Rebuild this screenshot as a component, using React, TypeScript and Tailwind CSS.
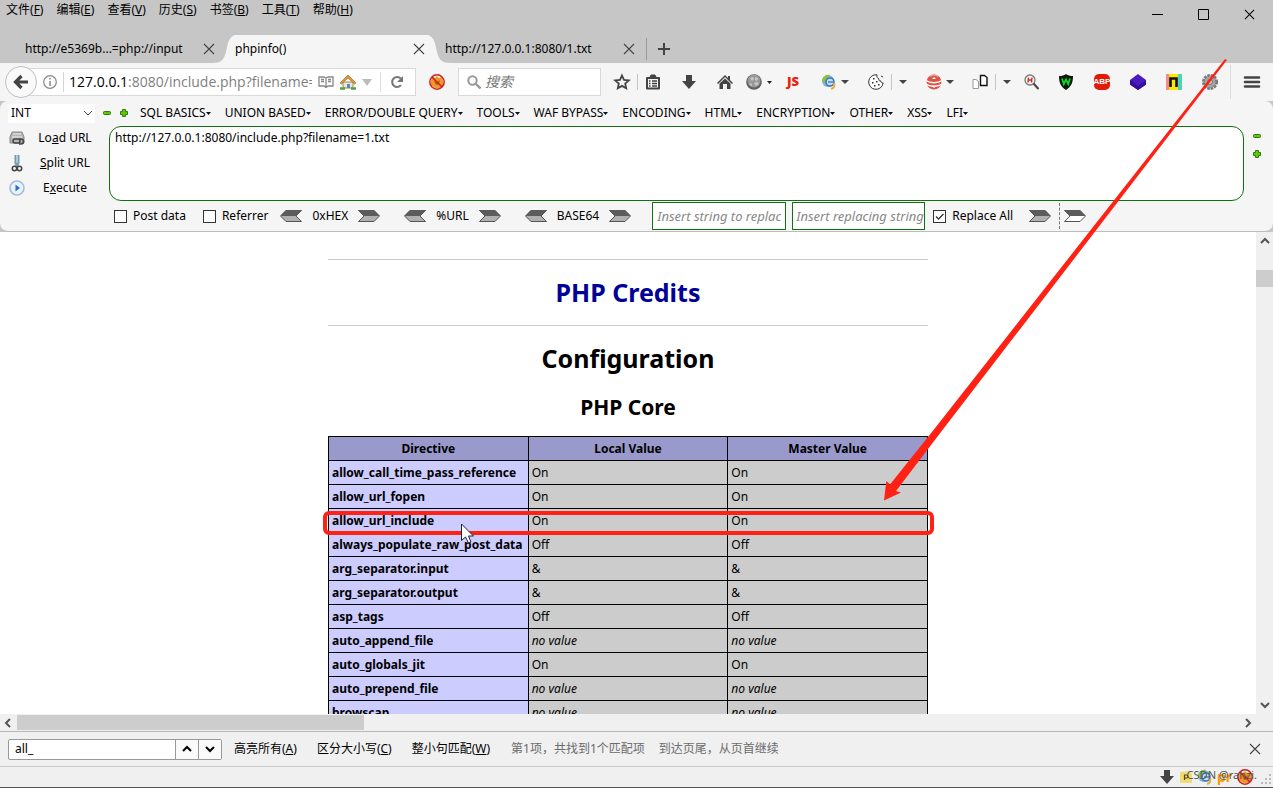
import React, { useState } from "react";

const MENUS = [
  ["文件", "F"],
  ["编辑", "E"],
  ["查看", "V"],
  ["历史", "S"],
  ["书签", "B"],
  ["工具", "T"],
  ["帮助", "H"],
];

const HACKBAR_MENUS = [
  "SQL BASICS",
  "UNION BASED",
  "ERROR/DOUBLE QUERY",
  "TOOLS",
  "WAF BYPASS",
  "ENCODING",
  "HTML",
  "ENCRYPTION",
  "OTHER",
  "XSS",
  "LFI",
];

const DIRECTIVES = [
  { name: "allow_call_time_pass_reference", value: "On" },
  { name: "allow_url_fopen", value: "On" },
  { name: "allow_url_include", value: "On", marked: true },
  { name: "always_populate_raw_post_data", value: "Off" },
  { name: "arg_separator.input", value: "&" },
  { name: "arg_separator.output", value: "&" },
  { name: "asp_tags", value: "Off" },
  { name: "auto_append_file", value: "" },
  { name: "auto_globals_jit", value: "On" },
  { name: "auto_prepend_file", value: "" },
  { name: "browscap", value: "" },
];

const Cross = ({ className = "size-3" }: { className?: string }) => (
  <svg viewBox="0 0 12 12" className={className} fill="none" stroke="currentColor" strokeWidth="1.1">
    <path d="M1 1l10 10M11 1L1 11" />
  </svg>
);

const Chevron = ({ d, className }: { d: string; className: string }) => (
  <svg viewBox="0 0 10 10" className={className} fill="none" stroke="currentColor" strokeWidth="2">
    <path d={d} />
  </svg>
);

const UP = "M1 7l4-4 4 4";
const DOWN = "M1 3l4 4 4-4";
const LEFT = "M7 1L3 5l4 4";
const RIGHT = "M3 1l4 4-4 4";

const Caret = ({ className = "ml-1" }: { className?: string }) => (
  <svg viewBox="0 0 8 4" className={`h-1 w-2 shrink-0 ${className}`}>
    <path d="M0 0h8L4 4z" fill="#444" />
  </svg>
);

const Separator = () => <span className="ml-[7px] h-4 w-px shrink-0 bg-[#c4c4c4]" />;

const Icon = ({ children, className = "ml-5", label }: { children: React.ReactNode; className?: string; label: string }) => (
  <button type="button" aria-label={label} className={`size-4 shrink-0 ${className}`}>
    <svg viewBox="0 0 16 16" className="size-4 overflow-visible">
      {children}
    </svg>
  </button>
);

const TabEdge = ({ flip = false }: { flip?: boolean }) => (
  <svg viewBox="0 0 26 28" className={`h-7 w-[26px] shrink-0 ${flip ? "-scale-x-100" : ""}`}>
    <path d="M0 28C9 28 12 25 14 17C16 7 17 0 26 0V28Z" fill="#f5f5f5" />
  </svg>
);

const NoFox = () => (
  <>
    <path d="M2 6l2-3 2 1 2-2 2 2 3-1 1 3v5l-3 3H6l-4-3z" fill="#f0962a" />
    <path d="M5 7l3 1 3-2-1 4-3 1z" fill="#b8600c" />
    <circle cx="8" cy="8" r="7.2" fill="none" stroke="#c9221c" strokeWidth="1.5" />
    <path d="M3 3l10 10" stroke="#c9221c" strokeWidth="1.5" />
  </>
);

const Earth = () => (
  <>
    <circle cx="7" cy="7" r="6" fill="#7fb2e4" />
    <path d="M1 6c1-4 5-6 8-5-1 2-3 2-3 4s-3 3-4 4z" fill="#8fc23c" />
    <circle cx="9" cy="8" r="4" fill="#c6def2" stroke="#3c78b8" strokeWidth="1.6" />
    <path d="M10 15c3-1 4-3 3-6" fill="none" stroke="#e3b03c" strokeWidth="2" />
    <path d="M7 8h5" stroke="#3c78b8" strokeWidth="1.3" />
  </>
);

const Minus = () => (
  <svg viewBox="0 0 8 8" className="size-2">
    <rect x="0.5" y="2.5" width="7" height="3" rx="1" fill="#5dc80b" stroke="#2f7d05" />
  </svg>
);

const Plus = () => (
  <svg viewBox="0 0 8 8" className="size-2">
    <path d="M2.5 .5h3v2h2v3h-2v2h-3v-2h-2v-3h2z" fill="#5dc80b" stroke="#2f7d05" />
  </svg>
);

const Ribbon = ({ flip = false, hollow = false }: { flip?: boolean; hollow?: boolean }) => (
  <button type="button" aria-label={flip ? "decode" : "encode"} className="h-3 w-[22px] shrink-0">
    <svg viewBox="0 0 22 12" className={`h-3 w-[22px] ${flip ? "-scale-x-100" : ""}`}>
      <path d="M.5 .5H16L21.5 6L16 11.5H.5L6 6Z" fill={hollow ? "#fff" : "#b0b0b0"} stroke="#555" />
      <path d="M0 0H16L21.5 6H6Z" fill="#5c5c5c" />
    </svg>
  </button>
);

const TitleBar = () => (
  <header className="bg-[#c6c6c6]">
    <div className="flex h-[35px] items-start justify-between">
      <nav className="flex gap-[13px] pl-1.5 pt-0.5 text-xs">
        {MENUS.map(([label, key]) => (
          <button type="button" key={key} className="leading-4">
            {label}(<u>{key}</u>)
          </button>
        ))}
      </nav>
      <div className="flex h-7 items-center gap-[35px] pr-[18px]">
        <button type="button" aria-label="minimize">
          <svg viewBox="0 0 11 11" className="size-[11px]"><path d="M0 5.5h11" stroke="#000" /></svg>
        </button>
        <button type="button" aria-label="maximize">
          <svg viewBox="0 0 11 11" className="size-[11px]"><path d="M.5.5h10v10H.5z" fill="none" stroke="#000" /></svg>
        </button>
        <button type="button" aria-label="close"><Cross className="size-[11px]" /></button>
      </div>
    </div>
    <div className="flex h-7 items-center text-xs">
      <div className="flex w-[212px] shrink-0 items-center justify-between pl-[25px]">
        <span>http://e5369b...=php://input</span>
        <button type="button" aria-label="close tab" className="-mr-[3px] text-[#444]"><Cross /></button>
      </div>
      <TabEdge />
      <div className="z-10 -mx-1 flex h-7 w-[195px] shrink-0 items-center justify-between bg-[#f5f5f5] pl-px pr-1">
        <span>phpinfo()</span>
        <button type="button" aria-label="close tab" className="text-[#444]"><Cross /></button>
      </div>
      <TabEdge flip />
      <div className="-ml-[15px] flex w-[199px] shrink-0 items-center justify-between pl-[9px]">
        <span className="z-10">http://127.0.0.1:8080/1.txt</span>
        <button type="button" aria-label="close tab" className="text-[#444]"><Cross /></button>
      </div>
      <span className="ml-[11px] h-[22px] w-px bg-[#999]" />
      <button type="button" aria-label="new tab" className="ml-[11px]">
        <svg viewBox="0 0 12 12" className="size-3"><path d="M6 0v12M0 6h12" stroke="#444" strokeWidth="2" /></svg>
      </button>
    </div>
  </header>
);

const NavBar = () => (
  <div className="flex h-[38px] items-center bg-[#f5f5f5] pl-[5px]">
    <button
      type="button"
      aria-label="back"
      className="z-10 -mr-[17px] flex size-8 shrink-0 items-center justify-center rounded-full border border-[#c0c0c0] bg-[#fafafa]"
    >
      <svg viewBox="0 0 16 16" className="size-4">
        <path d="M8.5 2L2.5 8l6 6M3 8h12" fill="none" stroke="#444" strokeWidth="3.2" />
      </svg>
    </button>
    <div className="flex h-7 min-w-0 flex-1 items-center border border-[#d9d9d9] bg-white pl-[22px]">
      <svg viewBox="0 0 14 14" className="size-3.5 shrink-0">
        <circle cx="7" cy="7" r="6.3" fill="none" stroke="#888" strokeWidth="1.2" />
        <path d="M7 6v5M7 3v1.6" stroke="#888" strokeWidth="1.5" />
      </svg>
      <span className="ml-1.5 h-5 w-px shrink-0 bg-[#d4d4d4]" />
      <div className="ml-[5px] min-w-0 flex-1 overflow-hidden font-['Open_Sans','Noto_Sans',sans-serif] text-sm whitespace-nowrap text-[#808080]">
        <span className="text-black">127.0.0.1</span>:8080/include.php?filename=1.txt
      </div>
      <Icon label="reader view" className="ml-1.5">
        <path d="M1 3h5l2 1 2-1h5v9h-5l-2 1.5L6 12H1zM8 4v9M3 5.5h3M3 7.5h3M10 5.5h3M10 7.5h3" fill="none" stroke="#888" strokeWidth="1.3" />
      </Icon>
      <Icon label="home page" className="ml-1.5">
        <path d="M3 8h10v6H3z" fill="#ece5d5" stroke="#9c8868" />
        <path d="M7 10h3v4H7z" fill="#5b87c0" />
        <path d="M0 9L8 1l8 8-1.5 1L8 4l-6.5 6z" fill="#e09a3c" stroke="#a86820" strokeWidth=".7" />
        <path d="M0 14.500h5M11 14.500h5" stroke="#51a53c" strokeWidth="2.5" />
      </Icon>
      <svg viewBox="0 0 10 7" className="ml-1.5 h-[7px] w-2.5 shrink-0"><path d="M0 0h10L5 7z" fill="#bbb" /></svg>
      <span className="ml-2 h-5 w-px shrink-0 bg-[#dedede]" />
      <Icon label="reload" className="ml-2 mr-2.5">
        <path d="M12 11.200A5 5 0 1 1 11.800 4.500" fill="none" stroke="#777" strokeWidth="2" />
        <path d="M14 2v6H8z" fill="#777" />
      </Icon>
    </div>
    <Icon label="proxy off" className="ml-[13px]"><NoFox /></Icon>
    <div className="ml-[13px] flex h-7 w-[143px] shrink-0 items-center border border-[#d9d9d9] bg-white pl-2">
      <svg viewBox="0 0 14 14" className="size-3.5 shrink-0">
        <circle cx="5.5" cy="5.5" r="4.2" fill="none" stroke="#999" strokeWidth="2" />
        <path d="M8.5 8.5l5 5" stroke="#999" strokeWidth="2.4" />
      </svg>
      <input aria-label="搜索" placeholder="搜索" className="ml-1 w-full min-w-0 text-sm italic outline-none placeholder:text-[#777]" />
    </div>
    <Icon label="bookmark" className="ml-[13px]">
      <path d="M8 1.5l2 4.400 4.800.5-3.600 3.200 1 4.700L8 11.900l-4.200 2.400 1-4.700L1.200 6.400 6 5.900z" fill="none" stroke="#444" strokeWidth="1.8" />
    </Icon>
    <Separator />
    <Icon label="bookmarks list" className="ml-[7px]">
      <path d="M2 4h12v10.500H2z" fill="none" stroke="#444" strokeWidth="2" strokeLinejoin="round" />
      <path d="M5 3l1-2h4l1 2z" fill="#444" stroke="#444" />
      <path d="M4 7h1.500M7 7h5M4 9.500h1.500M7 9.500h5M4 12h1.500M7 12h5" stroke="#444" strokeWidth="1.3" />
    </Icon>
    <Icon label="downloads"><path d="M5 1h6v6h4l-7 8-7-8h4z" fill="#444" /></Icon>
    <Icon label="home">
      <path d="M0 9l8-8 3 3V2h2v4l3 3-1 1-7-7-7 7z" fill="#444" />
      <path d="M2.5 9.500L8 4.500l5.500 5V15H10v-5H6v5H2.500z" fill="#444" />
    </Icon>
    <Icon label="user agent" className="ml-[13px]">
      <circle cx="8" cy="8" r="7.8" fill="#606060" />
      <circle cx="8" cy="7" r="6.5" fill="#999" />
      <path d="M4 4l3-1 1 2-2 2zM9 3l3 1-1 3-2-1zM3 9l3 1v2l-2-1zM8 9l3-1 2 2-3 2z" fill="#c8c8c8" />
    </Icon>
    <svg viewBox="0 0 5 3" className="ml-[5px] h-[3px] w-[5px] shrink-0"><path d="M0 0h5L2.5 3z" fill="#222" /></svg>
    <button type="button" className="ml-3 w-[18px] shrink-0 text-center font-['Open_Sans',sans-serif] text-[13px] font-extrabold text-[#ee1c0c]">JS</button>
    <Icon label="earth" className="ml-[19px]"><Earth /></Icon>
    <Caret />
    <Icon label="cookies" className="ml-[19px]">
      <path d="M9 .8A7.300 7.300 0 1 0 15.200 9c-1.700.2-2.500-1-2.200-2-1.600.3-2.600-.8-2.100-2.200C9.300 4.400 8.500 2.700 9 .8zM13 2l2 1" fill="#fff" stroke="#333" />
      <path d="M5 4h1.500v1.500H5zM4 8h1.500v1.500H4zM8 7h1.500v1.500H8zM6 11h1.500v1.500H6zM10 10h1.500v1.500H10z" fill="#333" />
    </Icon>
    <Separator />
    <Caret className="ml-[7px]" />
    <Icon label="stack" className="ml-[19px]">
      <circle cx="8" cy="8" r="7.5" fill="#dd5546" />
      <path d="M4 2.500a7 7 0 0 1 8 0" fill="none" stroke="#f0a095" strokeWidth="1.5" />
      <path d="M0 6.500c4 3 12 3 16 0M0 10c4 3 12 3 16 0" fill="none" stroke="#fff" strokeWidth="1.3" />
      <path d="M6 5l2-2 2 2zM6 12l2 2 2-2z" fill="#fff" />
    </Icon>
    <Caret />
    <Icon label="session pages" className="ml-[18px]">
      <path d="M1 5.500h3l2.500 2V14.500H1z" fill="#fff" stroke="#999" />
      <path d="M8.500 1.500h4l2.500 2v8H8.500z" fill="#fff" stroke="#111" strokeWidth="1.4" />
    </Icon>
    <Separator />
    <Caret className="ml-[7px]" />
    <Icon label="inspect" className="ml-[13px]">
      <circle cx="6" cy="6" r="5" fill="#fff" stroke="#777" strokeWidth="1.3" />
      <path d="M4.500 3.500l-.5 5M8 3.500l-.5 5M4.300 6h3.500" stroke="#d9261c" strokeWidth="1.5" />
      <path d="M9.500 9.500l5 5.500" stroke="#444" strokeWidth="2" />
    </Icon>
    <Icon label="wappalyzer" className="ml-[18px]">
      <path d="M8 0c2 1.500 4 2 7 2 0 7-2 11-7 14C3 13 1 9 1 2c3 0 5-.5 7-2z" fill="#0c1a0c" />
      <path d="M4 4.500l1.800 5.500L8 5.500 10.200 10 12 4.500" fill="none" stroke="#12d52a" strokeWidth="1.8" />
    </Icon>
    <button
      type="button"
      className="ml-5 flex h-4 w-4 shrink-0 items-center justify-center rounded-[5px] bg-[#e21a08] font-['Liberation_Sans',sans-serif] text-[8px] font-bold text-white"
    >
      ABP
    </button>
    <Icon label="layers">
      <path d="M0 10.500L8 5l8 5.500L8 16z" fill="#2b0c80" />
      <path d="M0 6v4.500L8 16l8-5.500V6z" fill="#34109a" />
      <path d="M0 6L8 0l8 6-8 6z" fill="#4a1cc0" />
    </Icon>
    <Icon label="netsparker">
      <path d="M0 0h4v16H0z" fill="#f08c8c" />
      <path d="M3 0h9v16H3z" fill="#ffe500" />
      <path d="M12 0h4v16h-4z" fill="#52d0b8" />
      <path d="M4.500 13V4.500h6V13" fill="none" stroke="#111" strokeWidth="2.6" />
    </Icon>
    <Icon label="settings">
      <circle cx="8" cy="8" r="6.5" fill="#a4a4a4" stroke="#777" strokeWidth="3" strokeDasharray="2.4 1" />
      <circle cx="8" cy="8" r="5.5" fill="#a4a4a4" />
      <circle cx="8" cy="8" r="2.5" fill="#ccc" stroke="#777" />
    </Icon>
    <span className="ml-3 h-[34px] w-px shrink-0 bg-[#dcdcdc]" />
    <Icon label="menu" className="mx-[13px]">
      <path d="M1 3.500h14M1 8h14M1 12.500h14" stroke="#444" strokeWidth="2.6" strokeLinecap="round" />
    </Icon>
  </div>
);

const CheckBox = ({ label, checked = false }: { label: string; checked?: boolean }) => {
  const [on, setOn] = useState(checked);
  return (
    <label className="flex items-center gap-1.5">
      <span className="grid size-[13px]">
        <input
          type="checkbox"
          checked={on}
          onChange={() => setOn(!on)}
          className="col-start-1 row-start-1 size-[13px] appearance-none border border-[#333] bg-white"
        />
        {on ? (
          <svg viewBox="0 0 13 13" className="pointer-events-none col-start-1 row-start-1 size-[13px]">
            <path d="M3 6.500l2.500 2.500L10.500 4" fill="none" stroke="#333" strokeWidth="1.3" />
          </svg>
        ) : null}
      </span>
      {label}
    </label>
  );
};

const Coder = ({ label }: { label: string }) => (
  <div className="flex items-center gap-2.5">
    <Ribbon flip />
    <span>{label}</span>
    <Ribbon />
  </div>
);

const HackBar = () => (
  <div className="bg-[#c6c6c6]">
    <div className="rounded-lg border-b border-[#bdbdbd] bg-[#f5f5f5] text-xs">
      <div className="flex h-6 items-center pl-2">
        <div className="grid h-[19px] w-[87px] shrink-0 items-center bg-white">
          <select aria-label="type" className="col-start-1 row-start-1 h-[19px] appearance-none pl-[3px]">
            <option>INT</option>
          </select>
          <svg viewBox="0 0 10 10" className="pointer-events-none col-start-1 row-start-1 mr-0.5 size-2.5 justify-self-end" fill="none" stroke="#444">
            <path d="M1 3l4 4 4-4" />
          </svg>
        </div>
        <button type="button" aria-label="remove" className="ml-2"><Minus /></button>
        <button type="button" aria-label="add" className="ml-[9px]"><Plus /></button>
        <div className="ml-3 flex gap-3.5">
          {HACKBAR_MENUS.map((name) => (
            <button type="button" key={name} className="flex items-center whitespace-nowrap">
              {name}
              <svg viewBox="0 0 5 3" className="h-[3px] w-[5px]"><path d="M0 0h5L2.5 3z" fill="#111" /></svg>
            </button>
          ))}
        </div>
      </div>
      <div className="flex items-start">
        <div className="w-[109px] shrink-0 pr-1">
          <button type="button" className="flex h-[25px] w-full items-center pl-[9px]">
            <svg viewBox="0 0 16 16" className="size-4">
              <path d="M3 2h10l2 5v6H1V7z" fill="#b5b5b5" stroke="#888" />
              <path d="M4 4h8M3 7h10" stroke="#eee" />
              <path d="M6 9h3a2 2 0 0 1 0 4H6a2 2 0 0 1 0-4zM10 9h2a2 2 0 0 1 0 5h-2" fill="none" stroke="#444" strokeWidth="1.5" />
            </svg>
            <span className="flex-1 text-center">Lo<u>a</u>d URL</span>
          </button>
          <button type="button" className="flex h-[25px] w-full items-center pl-[9px]">
            <svg viewBox="0 0 16 18" className="h-[18px] w-4">
              <path d="M6.500 1v8l3 3M9.500 1v8l-3 3" fill="none" stroke="#6c9cb0" strokeWidth="2" />
              <circle cx="5.5" cy="14.5" r="2.2" fill="none" stroke="#444" strokeWidth="1.5" />
              <circle cx="10.5" cy="14.5" r="2.2" fill="none" stroke="#444" strokeWidth="1.5" />
            </svg>
            <span className="flex-1 text-center"><u>S</u>plit URL</span>
          </button>
          <button type="button" className="flex h-[25px] w-full items-center pl-[9px]">
            <svg viewBox="0 0 16 16" className="size-4">
              <circle cx="8" cy="8" r="7" fill="#eaf3fc" stroke="#a3bbda" strokeWidth="1.6" />
              <path d="M6.500 4.500L11 8l-4.500 3.500z" fill="#2a6fc4" />
            </svg>
            <span className="flex-1 text-center">E<u>x</u>ecute</span>
          </button>
        </div>
        <textarea
          aria-label="url"
          defaultValue="http://127.0.0.1:8080/include.php?filename=1.txt"
          className="mt-px block h-[75px] min-w-0 flex-1 resize-none rounded-xl border border-[#127012] bg-white px-[5px] pt-[3px] outline-none"
        />
        <div className="flex w-[29px] shrink-0 flex-col items-center gap-2.5 pt-[7px] pr-1">
          <button type="button" aria-label="shrink" className="flex"><Minus /></button>
          <button type="button" aria-label="grow" className="flex"><Plus /></button>
        </div>
      </div>
      <div className="flex h-[30px] items-center pl-[114px]">
        <CheckBox label="Post data" />
        <div className="w-[17px]" />
        <CheckBox label="Referrer" />
        <div className="ml-3 flex gap-6">
          <Coder label="0xHEX" />
          <Coder label="%URL" />
          <Coder label="BASE64" />
        </div>
        <input
          aria-label="search string"
          placeholder="Insert string to replace"
          className="ml-[21px] h-7 w-[134px] border border-[#127012] bg-white px-1 text-[13px] italic outline-none placeholder:text-[#888]"
        />
        <input
          aria-label="replacing string"
          placeholder="Insert replacing string"
          className="ml-1.5 mr-2 h-7 w-[133px] border border-[#127012] bg-white pl-[3px] text-[13px] italic outline-none placeholder:text-[#888]"
        />
        <CheckBox label="Replace All" checked />
        <div className="ml-4 flex items-center gap-2">
          <Ribbon />
          <span className="h-[26px] border-l border-dashed border-[#777]" />
          <div className="-ml-1 flex"><Ribbon hollow /></div>
        </div>
      </div>
    </div>
  </div>
);

const cell = "h-6 border border-black px-[3px] leading-none align-middle";

const PhpInfo = () => (
  <main className="min-w-0 flex-1 overflow-hidden bg-white pt-[27px]">
    <div className="mx-auto w-[600px]">
      <hr className="border-[#ccc]" />
      <h1 className="flex h-[65px] items-center justify-center text-[25px] font-bold text-[#000099]">
        <a href="#credits">PHP Credits</a>
      </h1>
      <hr className="border-[#ccc]" />
      <h1 className="flex h-[65px] items-center justify-center text-[25px] font-bold">Configuration</h1>
      <h2 className="flex h-[45px] items-start justify-center text-[21px] leading-8 font-bold">PHP Core</h2>
      <table className="w-full table-fixed border-collapse text-xs">
        <thead>
          <tr className="bg-[#9999cc]">
            <th className={cell}>Directive</th>
            <th className={cell}>Local Value</th>
            <th className={cell}>Master Value</th>
          </tr>
        </thead>
        <tbody>
          {DIRECTIVES.map((row) => (
            <tr key={row.name} className="relative bg-[#cccccc]">
              <td className={`${cell} bg-[#ccccff] font-bold`}>
                {row.name}
                {row.marked ? (
                  <span className="pointer-events-none absolute -inset-x-1.5 top-0.5 z-10 h-6 rounded-md border-4 border-[#ff2214]" />
                ) : null}
              </td>
              <td className={cell}>{row.value || <i>no value</i>}</td>
              <td className={cell}>{row.value || <i>no value</i>}</td>
            </tr>
          ))}
        </tbody>
      </table>
    </div>
  </main>
);

const FindBar = () => (
  <div className="flex h-[35px] items-center border-t border-[#b8b8b8] bg-[#f0f0f0] pl-2 pr-3 text-xs">
    <div className="flex h-[21px] rounded-xs border border-[#999] bg-white">
      <input aria-label="find" defaultValue="all_" className="w-[166px] px-1.5 outline-none" />
      <button type="button" aria-label="previous" className="flex w-[23px] items-center justify-center border-l border-[#999] bg-[#fafafa]">
        <Chevron d={UP} className="size-2.5" />
      </button>
      <button type="button" aria-label="next" className="flex w-[23px] items-center justify-center border-l border-[#999] bg-[#fafafa]">
        <Chevron d={DOWN} className="size-2.5" />
      </button>
    </div>
    <div className="ml-3 flex gap-5">
      <button type="button">高亮所有(<u>A</u>)</button>
      <button type="button">区分大小写(<u>C</u>)</button>
      <button type="button">整小句匹配(<u>W</u>)</button>
    </div>
    <span className="ml-[21px] text-[#6c6c6c]">第1项，共找到1个匹配项</span>
    <span className="ml-3.5 flex-1 text-[#6c6c6c]">到达页尾，从页首继续</span>
    <button type="button" aria-label="close find bar" className="text-[#444]"><Cross /></button>
  </div>
);

const StatusBar = () => (
  <footer className="relative flex h-[22px] items-center justify-end border-t border-b border-t-[#c8c8c8] border-b-[#555] bg-[#f0f0f0] pr-px">
    <Icon label="downloads" className=""><path d="M5 1h6v6h4l-7 8-7-8h4z" fill="#444" /></Icon>
    <Icon label="page info" className="ml-1">
      <path d="M1 3l9-1 3 3v9H1z" fill="#f0dc70" />
      <path d="M5.5 11V6h2a1.500 1.500 0 0 1 0 3h-2" fill="none" stroke="#5a4a10" strokeWidth="1.2" />
    </Icon>
    <Icon label="earth" className="ml-0.5"><Earth /></Icon>
    <span className="ml-1 w-5 text-sm leading-4 font-bold text-[#ff9a00]">pr</span>
    <Icon label="proxy off" className="mr-2"><NoFox /></Icon>
    <svg viewBox="0 0 11 16" className="h-4 w-[11px]">
      <path d="M8 5h2v2H8zM8 9h2v2H8zM4 9h2v2H4zM8 13h2v2H8zM4 13h2v2H4zM0 13h2v2H0z" fill="#bbb" />
    </svg>
    <span className="pointer-events-none absolute top-0 right-4 text-[11px] leading-4 text-[#555]">CSDN @ranzi.</span>
  </footer>
);

const App = () => (
  <div className="relative flex h-screen flex-col overflow-hidden bg-[#f0f0f0] font-['Noto_Sans','Noto_Sans_CJK_SC',sans-serif] text-black">
    <TitleBar />
    <NavBar />
    <HackBar />
    <div className="flex min-h-0 flex-1">
      <PhpInfo />
      <div className="flex w-[17px] flex-col items-center justify-between bg-[#f0f0f0] py-1 text-[#555]">
        <div className="flex w-full flex-col items-center">
          <Chevron d={UP} className="size-2.5" />
          <span className="mt-6 h-[17px] w-full bg-[#cdcdcd]" />
        </div>
        <Chevron d={DOWN} className="size-2.5" />
      </div>
    </div>
    <div className="flex h-[17px] items-center bg-[#f0f0f0] pl-[3px] pr-5 text-[#555]">
      <Chevron d={LEFT} className="size-2.5" />
      <span className="ml-1 h-[15px] w-[347px] bg-[#cdcdcd]" />
      <Chevron d={RIGHT} className="ml-auto size-2.5" />
    </div>
    <FindBar />
    <StatusBar />
    <svg viewBox="0 0 1273 788" className="pointer-events-none absolute top-0 left-0 z-20 h-[788px] w-[1273px]">
      <path d="M461.500 524v16.500l4-3.500 3 6 2.500-1-2.500-6h5z" fill="#fff" stroke="#223" />
      <path d="M1225 59L933.500 430 890 484.500 886.300 481 884 500.500 901 492.500 896 491 942.500 430 1227 60Z" fill="#ff2214" />
    </svg>
  </div>
);

export default App;
